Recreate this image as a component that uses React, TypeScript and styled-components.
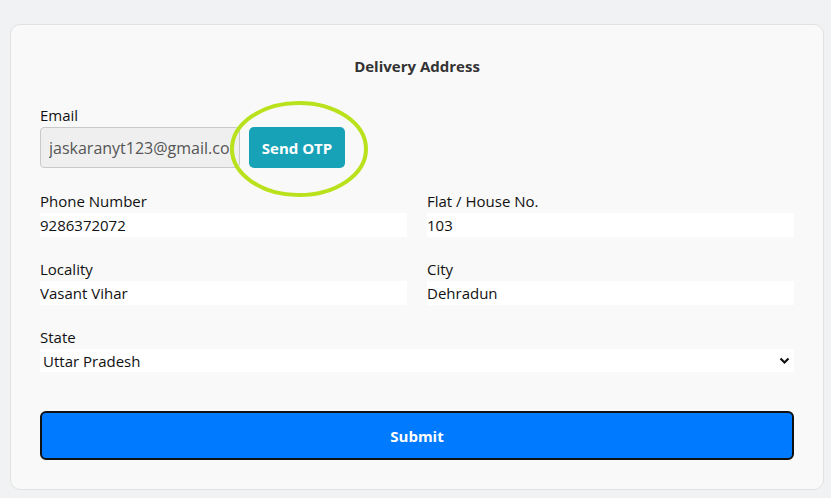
import React, { FC } from "react";
import styled, { createGlobalStyle } from "styled-components";

const GlobalStyle = createGlobalStyle`
  html, body {
    margin: 0;
    padding: 0;
    background: #f1f2f4;
    font-family: "Open Sans", "Noto Sans", sans-serif;
  }
  * {
    box-sizing: border-box;
  }
`;

const Page = styled.div`
  padding: 24px 7px 8px 10px;
`;

const Card = styled.form`
  background: #f9f9f9;
  border: 1px solid #e2e2e2;
  border-radius: 10px;
  padding: 30px 29px 29px;
  display: flex;
  flex-direction: column;
`;

const Title = styled.h2`
  margin: 0 0 26px;
  text-align: center;
  font-size: 15px;
  line-height: 22px;
  font-weight: 700;
  color: #333;
`;

const Label = styled.label`
  display: block;
  font-size: 15px;
  line-height: 24px;
  color: #111;
`;

const Field = styled.div`
  display: flex;
  flex-direction: column;
`;

const EmailRow = styled.div`
  position: relative;
  display: flex;
  align-items: stretch;
  gap: 9px;
  height: 41px;
  margin-bottom: 21px;
`;

const EmailInput = styled.input`
  width: 200px;
  height: 41px;
  padding: 0 8px;
  border: 1px solid #c9c9c9;
  border-radius: 4px;
  background: #efefef;
  color: #555;
  font-family: inherit;
  font-size: 16px;
  outline: none;
`;

const OtpButton = styled.button`
  width: 96px;
  height: 41px;
  border: none;
  border-radius: 5px;
  background: #17a2b8;
  color: #fff;
  font-family: inherit;
  font-size: 15px;
  font-weight: 700;
  cursor: pointer;
`;

const Highlight = styled.svg`
  position: absolute;
  left: 188px;
  top: -28px;
  pointer-events: none;
`;

const Grid = styled.div`
  display: grid;
  grid-template-columns: 1fr 1fr;
  column-gap: 20px;
  row-gap: 20px;
  margin-bottom: 20px;
`;

const PlainInput = styled.input`
  width: 100%;
  height: 24px;
  padding: 0;
  border: none;
  background: #fff;
  color: #111;
  font-family: inherit;
  font-size: 15px;
  outline: none;
`;

const SelectWrap = styled.div`
  position: relative;
  margin-bottom: 39px;
`;

const Select = styled.select`
  width: 100%;
  height: 23px;
  padding: 0 0 0 3px;
  border: none;
  background: #fff;
  color: #111;
  font-family: inherit;
  font-size: 15px;
  appearance: none;
  outline: none;
`;

const Chevron = styled.svg`
  position: absolute;
  right: 4px;
  top: 8px;
  pointer-events: none;
`;

const SubmitButton = styled.button`
  width: 100%;
  height: 49px;
  border: 2px solid #111;
  border-radius: 6px;
  background: #007bff;
  color: #fff;
  font-family: inherit;
  font-size: 15px;
  font-weight: 700;
  cursor: pointer;
`;

type TextFieldProps = {
  label: string;
  value: string;
};

const TextField: FC<TextFieldProps> = ({ label, value }) => (
  <Field>
    <Label>{label}</Label>
    <PlainInput defaultValue={value} />
  </Field>
);

const App: FC = () => {
  return (
    <Page>
      <GlobalStyle />
      <Card onSubmit={(e) => e.preventDefault()}>
        <Title>Delivery Address</Title>
        <Label>Email</Label>
        <EmailRow>
          <EmailInput defaultValue="jaskaranyt123@gmail.com" readOnly />
          <OtpButton type="button">Send OTP</OtpButton>
          <Highlight width="142" height="100" viewBox="0 0 142 100">
            <ellipse cx="71" cy="50" rx="67" ry="46" fill="none" stroke="#b9e21c" strokeWidth="4" />
          </Highlight>
        </EmailRow>
        <Grid>
          <TextField label="Phone Number" value="9286372072" />
          <TextField label="Flat / House No." value="103" />
          <TextField label="Locality" value="Vasant Vihar" />
          <TextField label="City" value="Dehradun" />
        </Grid>
        <Field>
          <Label>State</Label>
          <SelectWrap>
            <Select defaultValue="Uttar Pradesh">
              <option>Uttar Pradesh</option>
              <option>Uttarakhand</option>
              <option>Delhi</option>
            </Select>
            <Chevron width="11" height="8" viewBox="0 0 11 8">
              <path d="M1.5 1.5 L5.5 5.5 L9.5 1.5" fill="none" stroke="#111" strokeWidth="2.2" />
            </Chevron>
          </SelectWrap>
        </Field>
        <SubmitButton type="submit">Submit</SubmitButton>
      </Card>
    </Page>
  );
};

export default App;
